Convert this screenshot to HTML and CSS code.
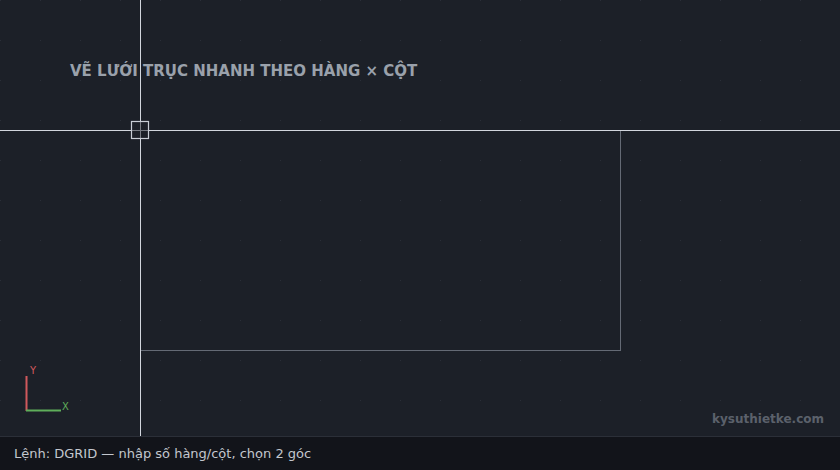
FILE: index.html
```html
<!DOCTYPE html>
<html lang="vi">
<head>
    <meta charset="UTF-8">
    <title>DGRID - Vẽ lưới trục</title>
    <link rel="stylesheet" href="styles.css">
</head>
<body>
    <div class="app">
        <div class="canvas">
            <svg class="drawing" width="840" height="436" viewBox="0 0 840 436">
                <defs>
                    <pattern id="dots" width="40" height="40" patternUnits="userSpaceOnUse">
                        <rect x="0" y="0" width="1" height="1" fill="#2a2e38"/>
                    </pattern>
                </defs>
                <rect x="0" y="0" width="840" height="436" fill="url(#dots)"/>

                <!-- khung chữ nhật đang kéo -->
                <rect x="140.5" y="130.5" width="480" height="220" fill="none" stroke="#646a75" stroke-width="1"/>

                <!-- crosshair -->
                <line x1="0" y1="130.5" x2="840" y2="130.5" stroke="#d2d6de" stroke-width="1"/>
                <line x1="140.5" y1="0" x2="140.5" y2="436" stroke="#d2d6de" stroke-width="1"/>
                <rect x="131.5" y="121.5" width="17" height="17" fill="#1d2028" fill-opacity="0.5" stroke="#c9cdd5" stroke-width="1.2"/>

                <!-- UCS -->
                <line x1="26.5" y1="376" x2="26.5" y2="411" stroke="#d0585c" stroke-width="2"/>
                <line x1="26" y1="410.5" x2="61" y2="410.5" stroke="#5fae5a" stroke-width="2"/>
                <text x="30" y="374" class="ucs-y">Y</text>
                <text x="62" y="410" class="ucs-x">X</text>
            </svg>

            <h1 class="title">VẼ LƯỚI TRỤC NHANH THEO HÀNG × CỘT</h1>
            <div class="watermark">kysuthietke.com</div>
        </div>
        <div class="cmdline">Lệnh: DGRID — nhập số hàng/cột, chọn 2 góc</div>
    </div>
</body>
</html>
```

FILE: styles.css
```css
:root {
    --bg: #1c2028;
    --bar: #12141a;
}

html, body {
    margin: 0;
    padding: 0;
    background: var(--bg);
    font-family: 'DejaVu Sans', 'Noto Sans', sans-serif;
}

.app {
    width: 840px;
    height: 470px;
    display: flex;
    flex-direction: column;
    overflow: hidden;
}

.canvas {
    position: relative;
    flex: 1;
    background: var(--bg);
}

.drawing {
    position: absolute;
    left: 0;
    top: 0;
    display: block;
}

.title {
    position: absolute;
    left: 70px;
    top: 62px;
    margin: 0;
    font-size: 15px;
    font-weight: bold;
    line-height: 18px;
    color: #9aa1ab;
}

.ucs-y, .ucs-x {
    font-family: 'DejaVu Sans', sans-serif;
    font-size: 10px;
}

.ucs-y {
    fill: #d0585c;
}

.ucs-x {
    fill: #5fae5a;
}

.watermark {
    position: absolute;
    right: 16px;
    bottom: 10px;
    font-size: 12px;
    font-weight: bold;
    color: #5b616b;
}

.cmdline {
    height: 33px;
    border-top: 1px solid #2b2f38;
    background: var(--bar);
    color: #c3c7ce;
    font-size: 13px;
    line-height: 33px;
    padding-left: 14px;
}
```
